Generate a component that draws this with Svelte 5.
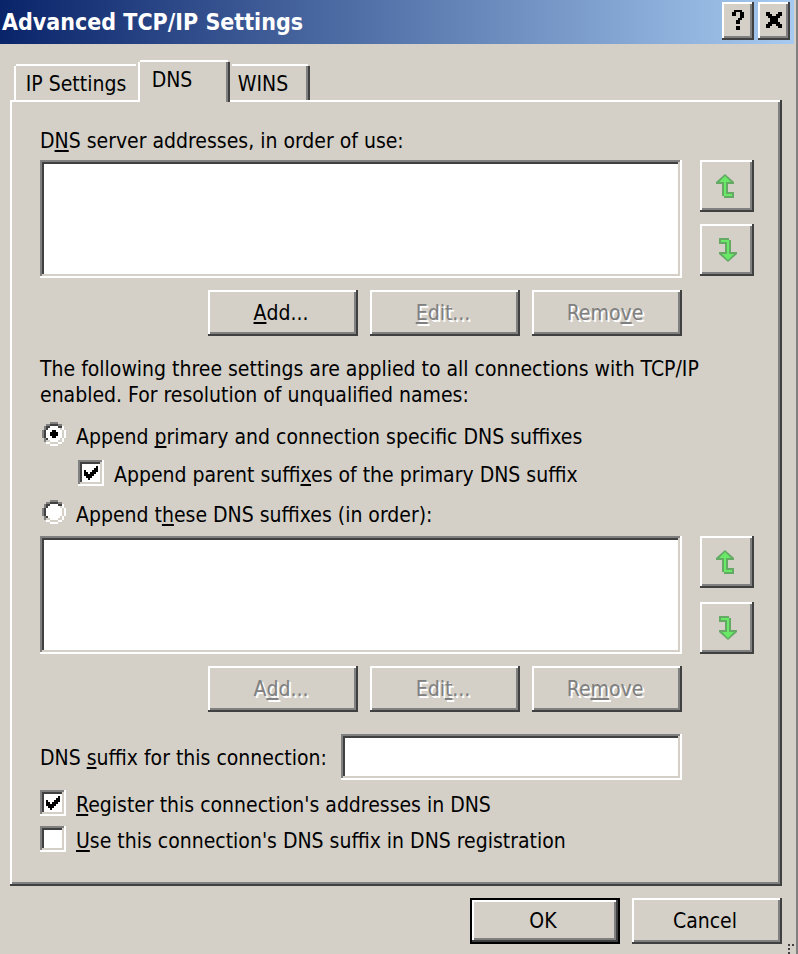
<script>
  let mode = $state('primary');
  let parentSuffixes = $state(true);
  let register = $state(true);
  let useSuffix = $state(false);
  let suffix = $state('');
</script>

{#snippet arrow(down)}
  <svg class="arrow" class:down width="22" height="24" viewBox="0 0 22 24" aria-hidden="true">
    <g transform={down ? 'rotate(180 10 12)' : null}>
      <path fill="#64a964" d="M9 0 18 8V10H12V18H18V24H8V22H6V10H0V8Z" />
      <path fill="#68ea66" d="M9 2 15 8H10V20H16V22H8V8H3Z" />
    </g>
  </svg>
{/snippet}

{#snippet tick()}
  <svg width="14" height="14" viewBox="0 0 7 7" shape-rendering="crispEdges" aria-hidden="true">
    <path d="M6 0h1v3h-1v1h-1v1h-1v1h-1v1h-1v-1h-1v-1h-1v-3h1v1h1v1h1v-1h1v-1h1v-1h1z" />
  </svg>
{/snippet}

{#snippet ring(on)}
  <svg width="24" height="24" viewBox="0 0 12 12" shape-rendering="crispEdges" aria-hidden="true">
    <path fill="#fff" d="M4 1h4v1h2v2h1v4h-1v2h-2v1h-4v-1h-2v-2h-1v-4h1v-2h2z" />
    <path fill="#808080" d="M4 0h4v1h-4zM2 1h2v1h-2zM8 1h2v1h-2zM1 2h1v2h-1zM0 4h1v4h-1zM1 8h1v2h-1z" />
    <path fill="#404040" d="M4 1h4v1h-4zM2 2h2v1h-2zM8 2h2v1h-2zM2 3h1v1h-1zM1 4h1v4h-1zM2 8h1v1h-1z" />
    <path fill="#d4d0c8" d="M9 3h1v1h-1zM10 4h1v4h-1zM9 8h1v1h-1zM2 9h2v1h-2zM8 9h2v1h-2zM4 10h4v1h-4z" />
    <path fill="#fff" d="M10 2h1v2h-1zM11 4h1v4h-1zM10 8h1v2h-1zM2 10h2v1h-2zM8 10h2v1h-2zM4 11h4v1h-4z" />
    {#if on}<path d="M5 4h2v1h1v2h-1v1h-2v-1h-1v-2h1z" />{/if}
  </svg>
{/snippet}

<div class="dialog" role="dialog" aria-labelledby="title">
  <header>
    <h1 id="title">Advanced TCP/IP Settings</h1>
    <button class="raised" aria-label="Help">
      <svg width="12" height="20" viewBox="0 0 6 10" shape-rendering="crispEdges" aria-hidden="true">
        <path d="M1 0h4v1h1v3h-1v1h-1v2h-2v-2h1v-1h1v-3h-2v2h-2v-2h1zM2 8h2v2h-2z" />
      </svg>
    </button>
    <button class="raised" aria-label="Close">
      <svg width="16" height="16" viewBox="0 0 8 8" shape-rendering="crispEdges" aria-hidden="true">
        <path d="M0 0h2v1h1v1h2v-1h1v-1h2v2h-1v1h-1v2h1v1h1v2h-2v-1h-1v-1h-2v1h-1v1h-2v-2h1v-1h1v-2h-1v-1h-1z" />
      </svg>
    </button>
  </header>

  <main>
    <div class="tabs" role="tablist">
      <button class="tab first" role="tab" aria-selected="false">IP Settings</button>
      <button class="tab active" role="tab" aria-selected="true">DNS</button>
      <button class="tab last" role="tab" aria-selected="false">WINS</button>
    </div>

    <section class="panel">
      <label class="line" for="servers">D<u>N</u>S server addresses, in order of use:</label>
      <div class="listing">
        <select id="servers" class="sunken" size="4"></select>
        <div class="order">
          <button class="raised" aria-label="Move server up">{@render arrow(false)}</button>
          <button class="raised" aria-label="Move server down">{@render arrow(true)}</button>
        </div>
        <div class="actions">
          <button class="raised"><u>A</u>dd...</button>
          <button class="raised" disabled><u>E</u>dit...</button>
          <button class="raised" disabled>Remo<u>v</u>e</button>
        </div>
      </div>

      <p>
        The following three settings are applied to all connections with TCP/IP
        enabled. For resolution of unqualified names:
      </p>

      <label class="option radio">
        <span class="mark"><input type="radio" name="mode" value="primary" bind:group={mode} />{@render ring(mode === 'primary')}</span>
        <span class="text">Append <u>p</u>rimary and connection specific DNS suffixes</span>
      </label>
      <label class="option nested">
        <span class="mark sunken"><input type="checkbox" bind:checked={parentSuffixes} />{#if parentSuffixes}{@render tick()}{/if}</span>
        <span class="text">Append parent suffi<u>x</u>es of the primary DNS suffix</span>
      </label>
      <label class="option radio">
        <span class="mark"><input type="radio" name="mode" value="custom" bind:group={mode} />{@render ring(mode === 'custom')}</span>
        <span class="text">Append t<u>h</u>ese DNS suffixes (in order):</span>
      </label>

      <div class="listing second">
        <select class="sunken" size="4" aria-label="DNS suffixes"></select>
        <div class="order">
          <button class="raised" aria-label="Move suffix up">{@render arrow(false)}</button>
          <button class="raised" aria-label="Move suffix down">{@render arrow(true)}</button>
        </div>
        <div class="actions">
          <button class="raised" disabled>A<u>d</u>d...</button>
          <button class="raised" disabled>Edi<u>t</u>...</button>
          <button class="raised" disabled>Re<u>m</u>ove</button>
        </div>
      </div>

      <div class="field">
        <label for="suffix">DNS <u>s</u>uffix for this connection:</label>
        <input id="suffix" class="sunken" type="text" bind:value={suffix} />
      </div>

      <label class="option">
        <span class="mark sunken"><input type="checkbox" bind:checked={register} />{#if register}{@render tick()}{/if}</span>
        <span class="text"><u>R</u>egister this connection's addresses in DNS</span>
      </label>
      <label class="option">
        <span class="mark sunken"><input type="checkbox" bind:checked={useSuffix} />{#if useSuffix}{@render tick()}{/if}</span>
        <span class="text"><u>U</u>se this connection's DNS suffix in DNS registration</span>
      </label>
    </section>

    <footer>
      <button class="raised default">OK</button>
      <button class="raised">Cancel</button>
    </footer>
  </main>

  <svg class="grip" width="6" height="10" viewBox="0 0 3 5" shape-rendering="crispEdges" aria-hidden="true">
    <path fill="#404040" d="M0 0h1v1h-1zM2 0h1v1h-1zM0 2h1v1h-1zM0 4h1v1h-1z" />
  </svg>
</div>

<style>
  :global(body) {
    margin: 0;
    background: #d4d0c8;
  }

  .dialog,
  .dialog * {
    box-sizing: border-box;
  }

  .dialog {
    position: relative;
    min-height: 100vh;
    padding-right: 2px;
    border-right: 2px solid #808080;
    background: #d4d0c8;
    color: #000;
    font: 21px/26px 'DejaVu Sans Condensed', 'DejaVu Sans', sans-serif;
  }

  button,
  input,
  select {
    margin: 0;
    padding: 0;
    border: 0;
    border-radius: 0;
    outline: 0;
    appearance: none;
    font: inherit;
    color: inherit;
  }

  u {
    text-decoration-thickness: 2px;
    text-underline-offset: 2px;
    text-decoration-skip-ink: none;
  }

  svg {
    display: block;
  }

  .raised {
    display: flex;
    align-items: center;
    justify-content: center;
    background: #d4d0c8;
    box-shadow:
      inset -2px -2px #404040,
      inset 2px 2px #fff,
      inset -4px -4px #808080;
  }

  .raised:disabled {
    color: #808080;
    text-shadow: 2px 2px #fff;
  }

  .sunken {
    background: #fff;
    box-shadow:
      inset -2px -2px #fff,
      inset 2px 2px #808080,
      inset -4px -4px #d4d0c8,
      inset 4px 4px #404040;
  }

  header {
    display: flex;
    align-items: center;
    gap: 4px;
    height: 44px;
    padding: 0 4px 2px 2px;
    background: linear-gradient(to right, #0a246a, #a6caf0);
  }

  h1 {
    flex: 1;
    margin: 0;
    padding-top: 2px;
    color: #fff;
    font-size: 23px;
    line-height: 26px;
  }

  header .raised {
    width: 32px;
    height: 38px;
    padding-bottom: 2px;
  }

  main {
    padding: 16px 12px 10px 10px;
  }

  .tabs {
    position: relative;
    display: flex;
    align-items: flex-end;
    height: 42px;
    padding-left: 4px;
    margin-bottom: -2px;
  }

  .tab {
    height: 36px;
    margin-bottom: 2px;
    padding-top: 4px;
    background: #d4d0c8;
    box-shadow:
      inset -2px 0 #404040,
      inset 2px 2px #fff,
      inset -4px 0 #808080;
    clip-path: polygon(0 2px, 2px 2px, 2px 0, calc(100% - 2px) 0, calc(100% - 2px) 2px, 100% 2px, 100% 100%, 0 100%);
  }

  .tab.first {
    width: 124px;
    box-shadow: inset 2px 2px #fff;
  }

  .tab.active {
    width: 92px;
    height: 42px;
    margin-bottom: 0;
    padding: 0 24px 2px 0;
  }

  .tab.last {
    width: 80px;
    padding-right: 14px;
    box-shadow:
      inset -2px 0 #404040,
      inset 0 2px #fff,
      inset -4px 0 #808080;
  }

  .panel {
    padding: 28px 28px 32px 30px;
    box-shadow:
      inset -2px -2px #404040,
      inset 2px 2px #fff,
      inset -4px -4px #808080;
  }

  .line {
    display: block;
    margin-bottom: 6px;
  }

  .listing {
    display: grid;
    grid-template-columns: 1fr 54px;
    gap: 12px 18px;
  }

  .listing select {
    width: 100%;
    height: 118px;
  }

  .order {
    display: flex;
    flex-direction: column;
    gap: 12px;
  }

  .second .order {
    gap: 14px;
  }

  .order .raised {
    height: 52px;
  }

  .arrow {
    overflow: visible;
  }

  .arrow.down {
    margin-left: 2px;
  }

  .actions {
    display: flex;
    justify-content: flex-end;
    gap: 12px;
  }

  .actions .raised,
  footer .raised {
    width: 150px;
    height: 46px;
    padding-right: 4px;
  }

  p {
    margin: 20px 0 14px;
  }

  .option {
    display: flex;
    align-items: flex-start;
    gap: 10px;
    margin-bottom: 8px;
  }

  .text {
    padding-top: 2px;
  }

  .option.radio {
    padding-left: 2px;
  }

  p + .option {
    margin-bottom: 10px;
  }

  .option.nested {
    margin-bottom: 12px;
    padding-left: 38px;
  }

  .mark {
    position: relative;
    display: grid;
    flex: none;
    place-items: center;
    width: 26px;
    height: 26px;
  }

  .radio .mark {
    width: 24px;
    height: 24px;
  }

  .mark input {
    position: absolute;
    inset: 0;
    width: 100%;
    height: 100%;
    background: transparent;
  }

  .mark svg {
    position: relative;
    pointer-events: none;
  }

  .field {
    display: flex;
    align-items: center;
    gap: 14px;
    margin: 22px 0 10px;
    padding-right: 72px;
  }

  .field label {
    padding-top: 2px;
  }

  .field .sunken {
    flex: 1;
    min-width: 0;
    height: 46px;
    padding: 0 10px;
  }

  .panel > .option:last-child {
    margin-bottom: 0;
  }

  footer {
    display: flex;
    justify-content: flex-end;
    gap: 12px;
    margin-top: 12px;
  }

  footer .default {
    box-shadow:
      inset 0 0 0 2px #000,
      inset -4px -4px #404040,
      inset 4px 4px #fff,
      inset -6px -6px #808080;
  }

  .grip {
    position: absolute;
    right: 2px;
    bottom: 0;
  }
</style>
